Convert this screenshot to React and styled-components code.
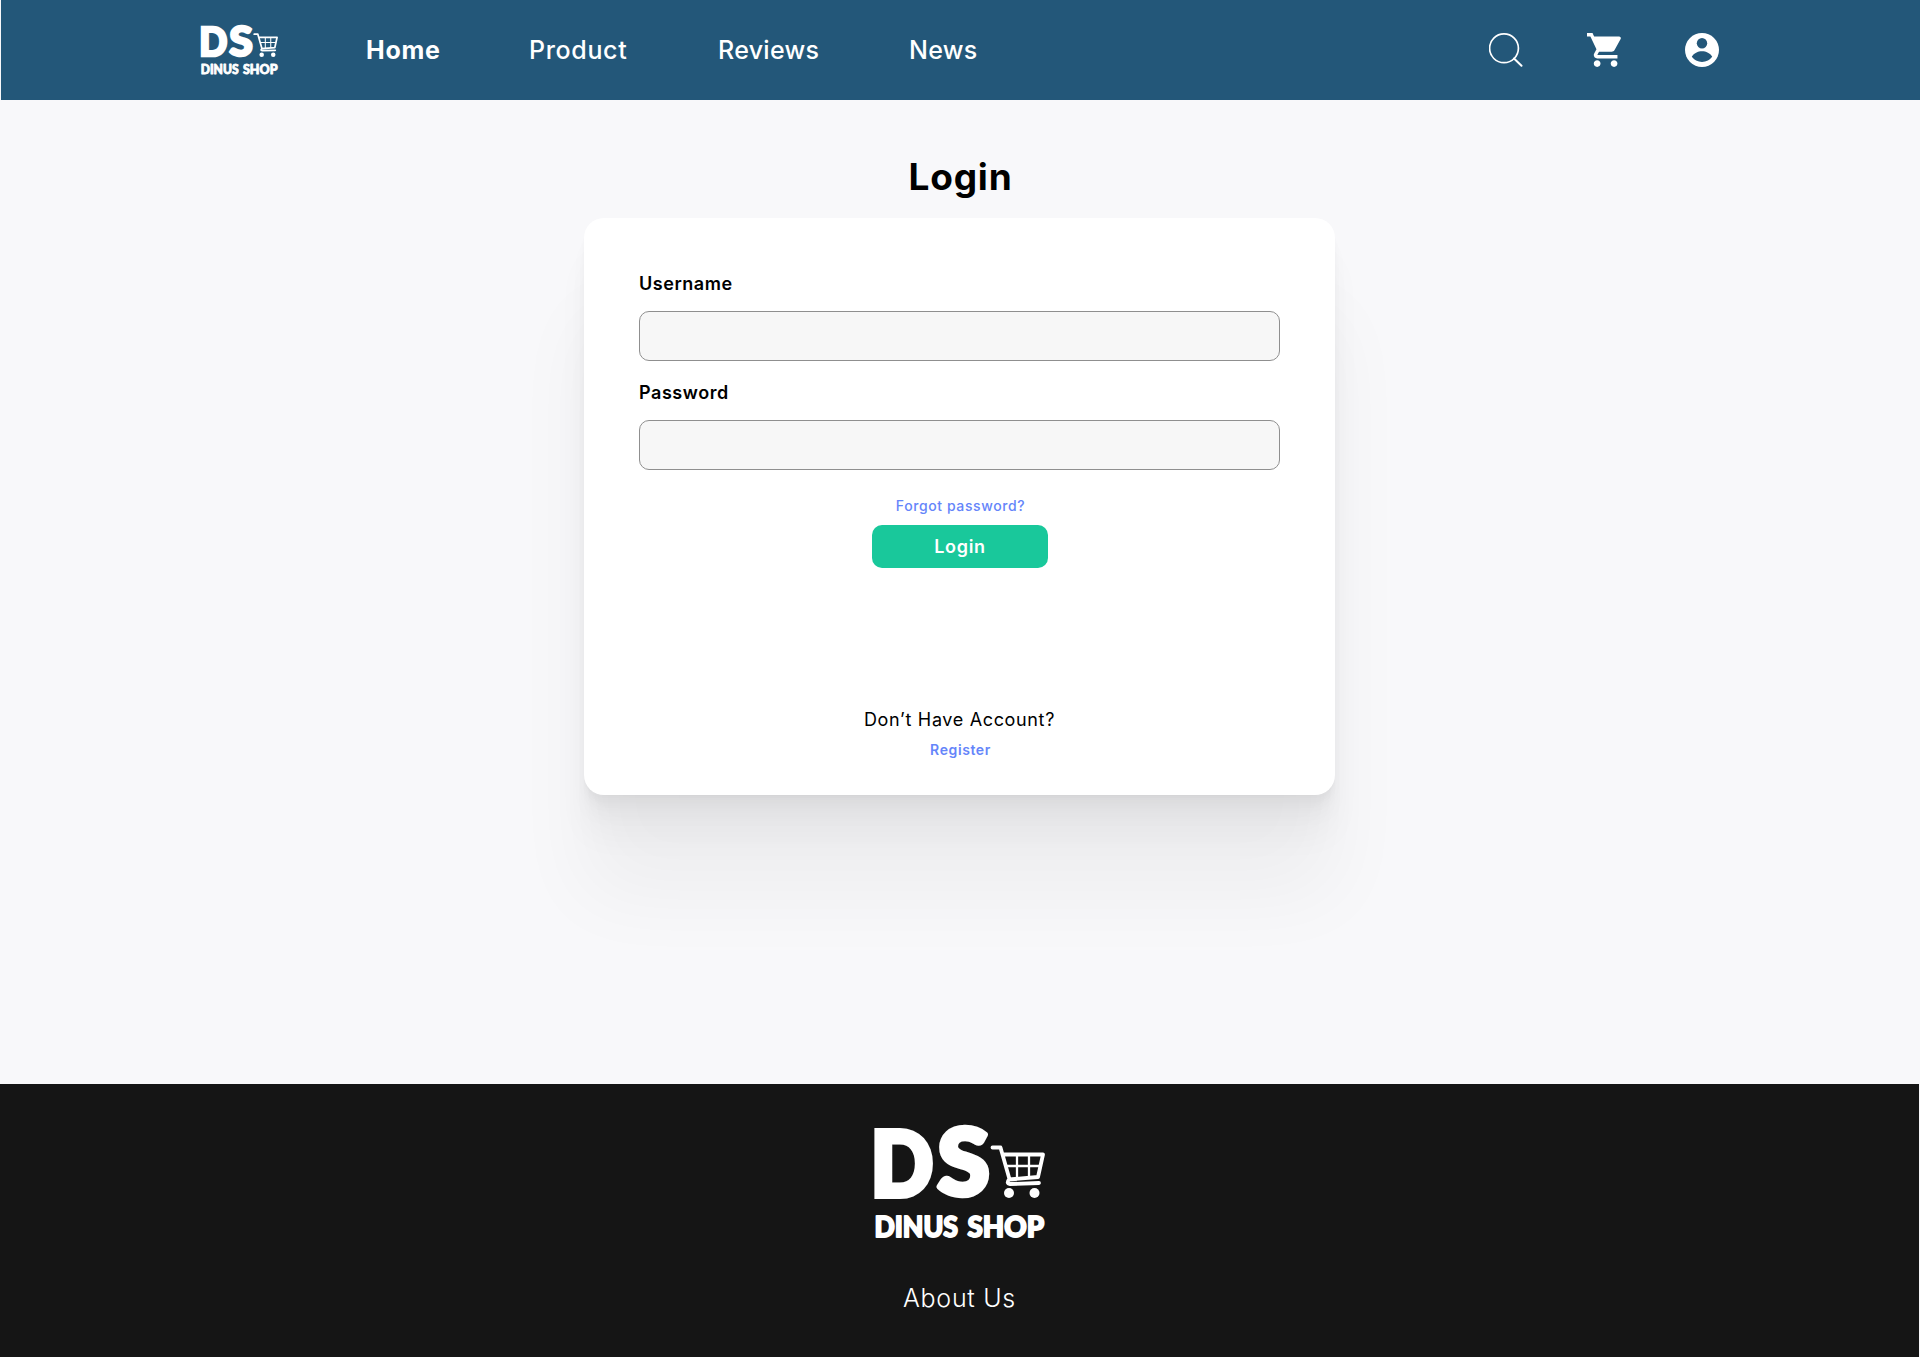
import React from "react";
import styled, { createGlobalStyle } from "styled-components";

const GlobalStyle = createGlobalStyle`
  *, *::before, *::after { box-sizing: border-box; }
  body { margin: 0; background: #f8f8fa; font-family: Inter, "Liberation Sans", sans-serif; }
  a { color: inherit; text-decoration: none; }
`;

const Page = styled.div`
  display: flex;
  flex-direction: column;
  height: 1357px;
  overflow: hidden;
`;

const Header = styled.header`
  display: flex;
  align-items: center;
  height: 100px;
  margin-left: 1px;
  padding: 0 201px 0 200px;
  background: #235779;
  color: #fff;
`;

const Nav = styled.nav`
  display: flex;
  margin-left: 88px;
`;

const NavLink = styled.a`
  width: ${(p) => p.$width}px;
  font-size: 25px;
  line-height: 30px;
  font-weight: ${(p) => (p.$active ? 700 : 500)};
  letter-spacing: ${(p) => p.$tracking || 0}px;
  white-space: nowrap;
`;

const Actions = styled.div`
  display: flex;
  align-items: center;
  gap: 64px;
  margin-left: auto;
`;

const IconButton = styled.button`
  display: flex;
  padding: 0;
  border: 0;
  background: none;
  color: inherit;
`;

const Main = styled.main`
  display: flex;
  flex: 1;
  flex-direction: column;
  align-items: center;
`;

const Title = styled.h1`
  height: 63px;
  margin: 55px 0 0;
  padding-left: 1px;
  font-size: 37px;
  line-height: 44px;
  font-weight: 700;
  letter-spacing: 0.8px;
`;

const Card = styled.form`
  display: flex;
  flex-direction: column;
  align-items: center;
  width: 751px;
  height: 577px;
  margin-right: 1px;
  padding: 54px 55px 0;
  border-radius: 20px;
  background: #fff;
  box-shadow: 0 100px 80px rgba(0, 0, 0, 0.042), 0 42px 33px rgba(0, 0, 0, 0.03),
    0 22px 18px rgba(0, 0, 0, 0.025), 0 12px 10px rgba(0, 0, 0, 0.021),
    0 7px 5px rgba(0, 0, 0, 0.017), 0 3px 2px rgba(0, 0, 0, 0.012);
`;

const Field = styled.label`
  display: block;
  width: 100%;
  height: 109px;
`;

const FieldLabel = styled.span`
  display: block;
  height: 39px;
  font-size: 18px;
  line-height: 23px;
  font-weight: 600;
  letter-spacing: 0.55px;
`;

const Input = styled.input`
  display: block;
  width: 100%;
  height: 50px;
  border: 1px solid #8f8f8f;
  border-radius: 10px;
  background: #f7f7f7;
`;

const TextLink = styled.a`
  padding-left: 2px;
  color: #6585fa;
  font-size: 14px;
  line-height: 18px;
  font-weight: ${(p) => p.$weight};
  letter-spacing: 0.6px;
`;

const Submit = styled.button`
  width: 176px;
  height: 43px;
  margin-top: 10px;
  padding: 0 0 0 1px;
  border: 0;
  border-radius: 10px;
  background: #19c89b;
  color: #fff;
  font: 600 18px/43px Inter, "Liberation Sans", sans-serif;
  letter-spacing: 0.7px;
`;

const Credentials = styled.div`
  display: flex;
  flex-direction: column;
  align-items: center;
  width: 100%;
`;

const FormActions = styled.div`
  display: flex;
  flex-direction: column;
  align-items: center;
  margin-top: 7px;
`;

const Signup = styled.div`
  display: flex;
  flex-direction: column;
  align-items: center;
  gap: 9px;
  margin-top: 140px;
`;

const Prompt = styled.span`
  font-size: 18px;
  line-height: 24px;
  letter-spacing: 0.65px;
`;

const Footer = styled.footer`
  display: flex;
  flex-direction: column;
  align-items: center;
  height: 273px;
  padding-top: 41px;
  margin-right: 1px;
  background: #151515;
  color: #fff;
`;

const FooterLink = styled.a`
  margin-top: 45px;
  font-size: 25px;
  line-height: 30px;
  font-weight: 300;
  letter-spacing: 0.7px;
`;

const LogoMark = styled.svg`
  flex: none;
  overflow: visible;
`;

const Logo = ({ width }) => (
  <LogoMark width={width} height={(width * 113) / 170} viewBox="0 0 170 113" role="img" aria-label="Dinus Shop">
    <g fill="#fff" stroke="#fff" strokeLinejoin="round" fontFamily="Lato, sans-serif" fontWeight="900">
      <text x="-4" y="70.5" fontSize="89.5" strokeWidth="6" strokeLinejoin="miter" textLength="62" lengthAdjust="spacingAndGlyphs">D</text>
      <text x="62.5" y="70.3" fontSize="91.5" strokeWidth="5.5" textLength="52" lengthAdjust="spacingAndGlyphs">S</text>
      <text x="-0.5" y="111.5" fontSize="27.5" strokeWidth="1.8" textLength="83.5" lengthAdjust="spacingAndGlyphs">DINUS</text>
      <text x="92.5" y="111.5" fontSize="27.5" strokeWidth="1.8" textLength="76.5" lengthAdjust="spacingAndGlyphs">SHOP</text>
    </g>
    <g fill="none" stroke="#fff" strokeLinecap="round" strokeLinejoin="round">
      <path d="M117.5 22.500h8l8.500 30M128 29.500h40l-5 22.500-29 2.500q-3 4 1 4.500l29-1" strokeWidth="3.8" />
      <path d="M142 30v23M154 30v22M131 41h34" strokeWidth="2.300" />
    </g>
    <circle cx="134" cy="68" r="5" fill="#fff" />
    <circle cx="159.500" cy="68" r="5" fill="#fff" />
  </LogoMark>
);

const SearchIcon = () => (
  <svg width="34" height="34" viewBox="0.5 0 34 34" fill="none" stroke="currentColor" strokeWidth="1.7">
    <circle cx="15.5" cy="15.3" r="14.4" />
    <path d="M25.5 25.5l7.5 7.2" strokeLinecap="round" strokeWidth="2" />
  </svg>
);

const CartIcon = () => (
  <svg width="34" height="34" viewBox="1 2 20.1 20" fill="currentColor">
    <path d="M7 18c-1.1 0-1.99.9-1.99 2S5.9 22 7 22s2-.9 2-2-.9-2-2-2zM1 2v2h2l3.6 7.59-1.35 2.45c-.16.28-.25.61-.25.96 0 1.1.9 2 2 2h12v-2H7.42c-.14 0-.25-.11-.25-.25l.03-.12.9-1.63h7.45c.75 0 1.41-.41 1.75-1.03l3.58-6.49c.08-.14.12-.31.12-.48 0-.55-.45-1-1-1H5.21l-.94-2H1zm16 16c-1.1 0-1.99.9-1.99 2s.89 2 1.99 2 2-.9 2-2-.9-2-2-2z" />
  </svg>
);

const UserIcon = () => (
  <svg width="34" height="34" viewBox="0 0 34 34">
    <circle cx="17" cy="17" r="17" fill="currentColor" />
    <circle cx="17" cy="10.3" r="5.2" fill="#235779" />
    <path d="M6.8 23.6C8.8 20.2 13 18.2 17 18.2s8.2 2 10.2 5.4C25.2 27 21 29 17 29S8.8 27 6.8 23.6z" fill="#235779" />
  </svg>
);

export default function App() {
  return (
    <Page>
      <GlobalStyle />
      <Header>
        <Logo width={77} />
        <Nav>
          <NavLink href="#" $active $width={163} $tracking={0.7}>Home</NavLink>
          <NavLink href="#" $width={189} $tracking={0.65}>Product</NavLink>
          <NavLink href="#" $width={191} $tracking={0.3}>Reviews</NavLink>
          <NavLink href="#" $width={80} $tracking={0.3}>News</NavLink>
        </Nav>
        <Actions>
          <IconButton aria-label="Search"><SearchIcon /></IconButton>
          <IconButton aria-label="Cart"><CartIcon /></IconButton>
          <IconButton aria-label="Account"><UserIcon /></IconButton>
        </Actions>
      </Header>
      <Main>
        <Title>Login</Title>
        <Card>
          <Credentials>
            <Field>
              <FieldLabel>Username</FieldLabel>
              <Input />
            </Field>
            <Field>
              <FieldLabel>Password</FieldLabel>
              <Input type="password" />
            </Field>
          </Credentials>
          <FormActions>
            <TextLink href="#" $weight={500}>Forgot password?</TextLink>
            <Submit type="button">Login</Submit>
          </FormActions>
          <Signup>
            <Prompt>Don’t Have Account?</Prompt>
            <TextLink href="#" $weight={600}>Register</TextLink>
          </Signup>
        </Card>
      </Main>
      <Footer>
        <Logo width={170} />
        <FooterLink href="#">About Us</FooterLink>
      </Footer>
    </Page>
  );
}
